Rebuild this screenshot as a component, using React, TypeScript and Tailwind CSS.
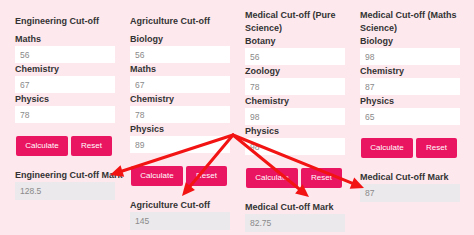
const columns = [
  {
    title: "Engineering Cut-off",
    fields: [["Maths", "56"], ["Chemistry", "67"], ["Physics", "78"]],
    outLabel: "Engineering Cut-off Mark",
    out: "128.5",
  },
  {
    title: "Agriculture Cut-off",
    fields: [["Biology", "56"], ["Maths", "67"], ["Chemistry", "78"], ["Physics", "89"]],
    outLabel: "Agriculture Cut-off",
    out: "145",
  },
  {
    title: "Medical Cut-off (Pure Science)",
    fields: [["Botany", "56"], ["Zoology", "78"], ["Chemistry", "98"], ["Physics", "98"]],
    outLabel: "Medical Cut-off Mark",
    out: "82.75",
  },
  {
    title: "Medical Cut-off (Maths Science)",
    fields: [["Biology", "98"], ["Chemistry", "87"], ["Physics", "65"]],
    outLabel: "Medical Cut-off Mark",
    out: "87",
  },
];

// annotation arrows drawn over the form
const apex = { x: 233, y: 135 };
const tips = [
  { x: 110, y: 175 },
  { x: 182, y: 196 },
  { x: 309, y: 197 },
  { x: 364, y: 188 },
];

const Arrow = ({ x, y }: { x: number; y: number }) => {
  const dx = x - apex.x;
  const dy = y - apex.y;
  const len = Math.hypot(dx, dy);
  const ux = dx / len;
  const uy = dy / len;
  const head = 13;
  const half = 6;
  const bx = x - ux * head;
  const by = y - uy * head;
  const pts = `${x},${y} ${bx - uy * half},${by + ux * half} ${bx + uy * half},${by - ux * half}`;
  return (
    <g>
      <line x1={apex.x} y1={apex.y} x2={bx} y2={by} stroke="#f21313" strokeWidth={3} strokeLinecap="round" />
      <polygon points={pts} fill="#f21313" />
    </g>
  );
};

const Column = ({ col }: { col: (typeof columns)[number] }) => (
  <div className="flex flex-col w-[100px]">
    <div className="min-h-[24px] flex items-center">
      <h3 className="font-bold text-[9px] leading-[13px] text-[#333]">{col.title}</h3>
    </div>
    {col.fields.map(([label, value]) => (
      <div key={label} className="flex flex-col">
        <label className="font-bold text-[9px] leading-[13px] h-[13px] text-[#333]">{label}</label>
        <input
          readOnly
          defaultValue={value}
          className="h-[17px] w-[100px] bg-white px-[5px] text-[8.5px] text-[#8a8a8a] outline-none"
        />
      </div>
    ))}
    <div className="flex gap-[3px] mt-[13px] pl-[1px]">
      <button className="h-[20px] w-[52px] rounded-[2px] bg-[#ea1560] text-white text-[8px]">Calculate</button>
      <button className="h-[20px] w-[41px] rounded-[2px] bg-[#ea1560] text-white text-[8px]">Reset</button>
    </div>
    <label className="mt-[13px] font-bold text-[9px] leading-[13px] h-[13px] text-[#333] whitespace-nowrap">
      {col.outLabel}
    </label>
    <div className="h-[18px] w-[100px] bg-[#ebe9ec] px-[5px] text-[8.5px] leading-[18px] text-[#8a8a8a]">{col.out}</div>
  </div>
);

export default function App() {
  return (
    <div className="relative w-[474px] h-[235px] overflow-hidden bg-[#fde8ee]" style={{ fontFamily: '"Liberation Sans", Arial, sans-serif' }}>
      <div className="flex items-start gap-[15px] pl-[15px] pt-[9px]">
        {columns.map((c) => (
          <Column key={c.title} col={c} />
        ))}
      </div>
      <svg className="absolute inset-0 pointer-events-none" width={474} height={235}>
        {tips.map((t) => (
          <Arrow key={`${t.x}-${t.y}`} x={t.x} y={t.y} />
        ))}
      </svg>
    </div>
  );
}
